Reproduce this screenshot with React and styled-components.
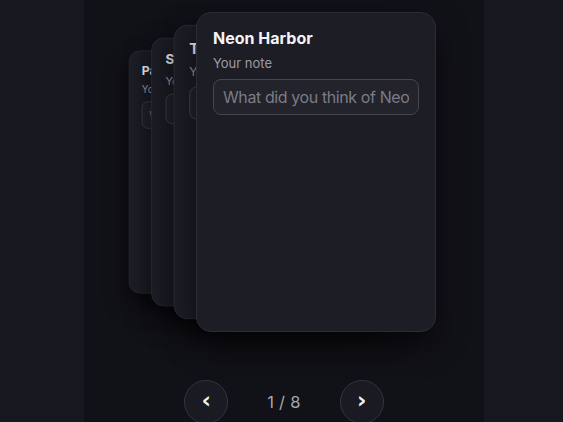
import React from "react";
import styled, { createGlobalStyle } from "styled-components";

const Global = createGlobalStyle`
  html, body { margin: 0; padding: 0; background: #17181f; height: 100%; overflow: hidden; }
  body { font-family: Inter, "Noto Sans", sans-serif; -webkit-font-smoothing: antialiased; }
`;

const Page = styled.div`
  display: flex;
  justify-content: center;
  padding-left: 5px;
  min-height: 422px;
`;

const Column = styled.main`
  width: 400px;
  min-height: 422px;
  background: #111118;
  display: flex;
  flex-direction: column;
  align-items: center;
  padding-top: 12px;
  box-sizing: border-box;
`;

const Stack = styled.div`
  position: relative;
  width: 400px;
  height: 320px;
`;

const Card = styled.section`
  position: absolute;
  top: 0;
  left: 50%;
  margin-left: -120px;
  width: 240px;
  height: 320px;
  box-sizing: border-box;
  padding: 16px;
  background: #1c1d25;
  border: 1px solid #2b2c35;
  border-radius: 15px;
  box-shadow: 0 14px 30px rgba(0, 0, 0, 0.55);
  z-index: ${(p) => 10 - p.$depth};
  transform: translateX(${(p) => (1 - p.$depth) * 32}px) scale(${(p) => 1 - 0.08 * p.$depth});
  transform-origin: center center;
  overflow: hidden;
`;

const Title = styled.h2`
  margin: 0 0 8px;
  font-size: 16px;
  font-weight: 700;
  color: #f4f4f6;
  line-height: 1.21;
  white-space: nowrap;
`;

const Label = styled.label`
  display: block;
  font-size: 13px;
  color: #9c9ca6;
  margin-bottom: 7px;
  line-height: 1.21;
`;

const NoteInput = styled.input`
  display: block;
  width: 100%;
  box-sizing: border-box;
  height: 36px;
  padding: 0 9px;
  font-family: inherit;
  font-size: 16px;
  letter-spacing: -0.4px;
  color: #e6e6ea;
  background: #22232b;
  border: 1px solid #454650;
  border-radius: 8px;
  outline: none;
  &::placeholder { color: #7b7c86; }
`;

const Nav = styled.nav`
  margin-top: 48px;
  display: flex;
  align-items: center;
  gap: 39px;
`;

const RoundButton = styled.button`
  width: 44px;
  height: 44px;
  border-radius: 50%;
  border: 1px solid #33343d;
  background: #1a1b22;
  color: #f2f2f5;
  font-family: "DejaVu Sans", sans-serif;
  font-size: 23px;
  font-weight: 700;
  line-height: 1;
  display: flex;
  align-items: center;
  justify-content: center;
  padding: 0 0 3px;
  cursor: pointer;
`;

const Counter = styled.span`
  font-size: 16.5px;
  color: #a6a6ae;
  letter-spacing: 0.3px;
`;

const albums = ["Neon Harbor", "Tidal Echoes", "Static Bloom", "Paper Lanterns"];

export default function App() {
  return (
    <>
      <Global />
      <Page>
        <Column>
          <Stack>
            {albums.map((name, i) => (
              <Card key={name} $depth={i}>
                <Title>{name}</Title>
                <Label>Your note</Label>
                <NoteInput placeholder={`What did you think of ${name}?`} />
              </Card>
            ))}
          </Stack>
          <Nav>
            <RoundButton aria-label="Previous">‹</RoundButton>
            <Counter>1 / 8</Counter>
            <RoundButton aria-label="Next">›</RoundButton>
          </Nav>
        </Column>
      </Page>
    </>
  );
}
